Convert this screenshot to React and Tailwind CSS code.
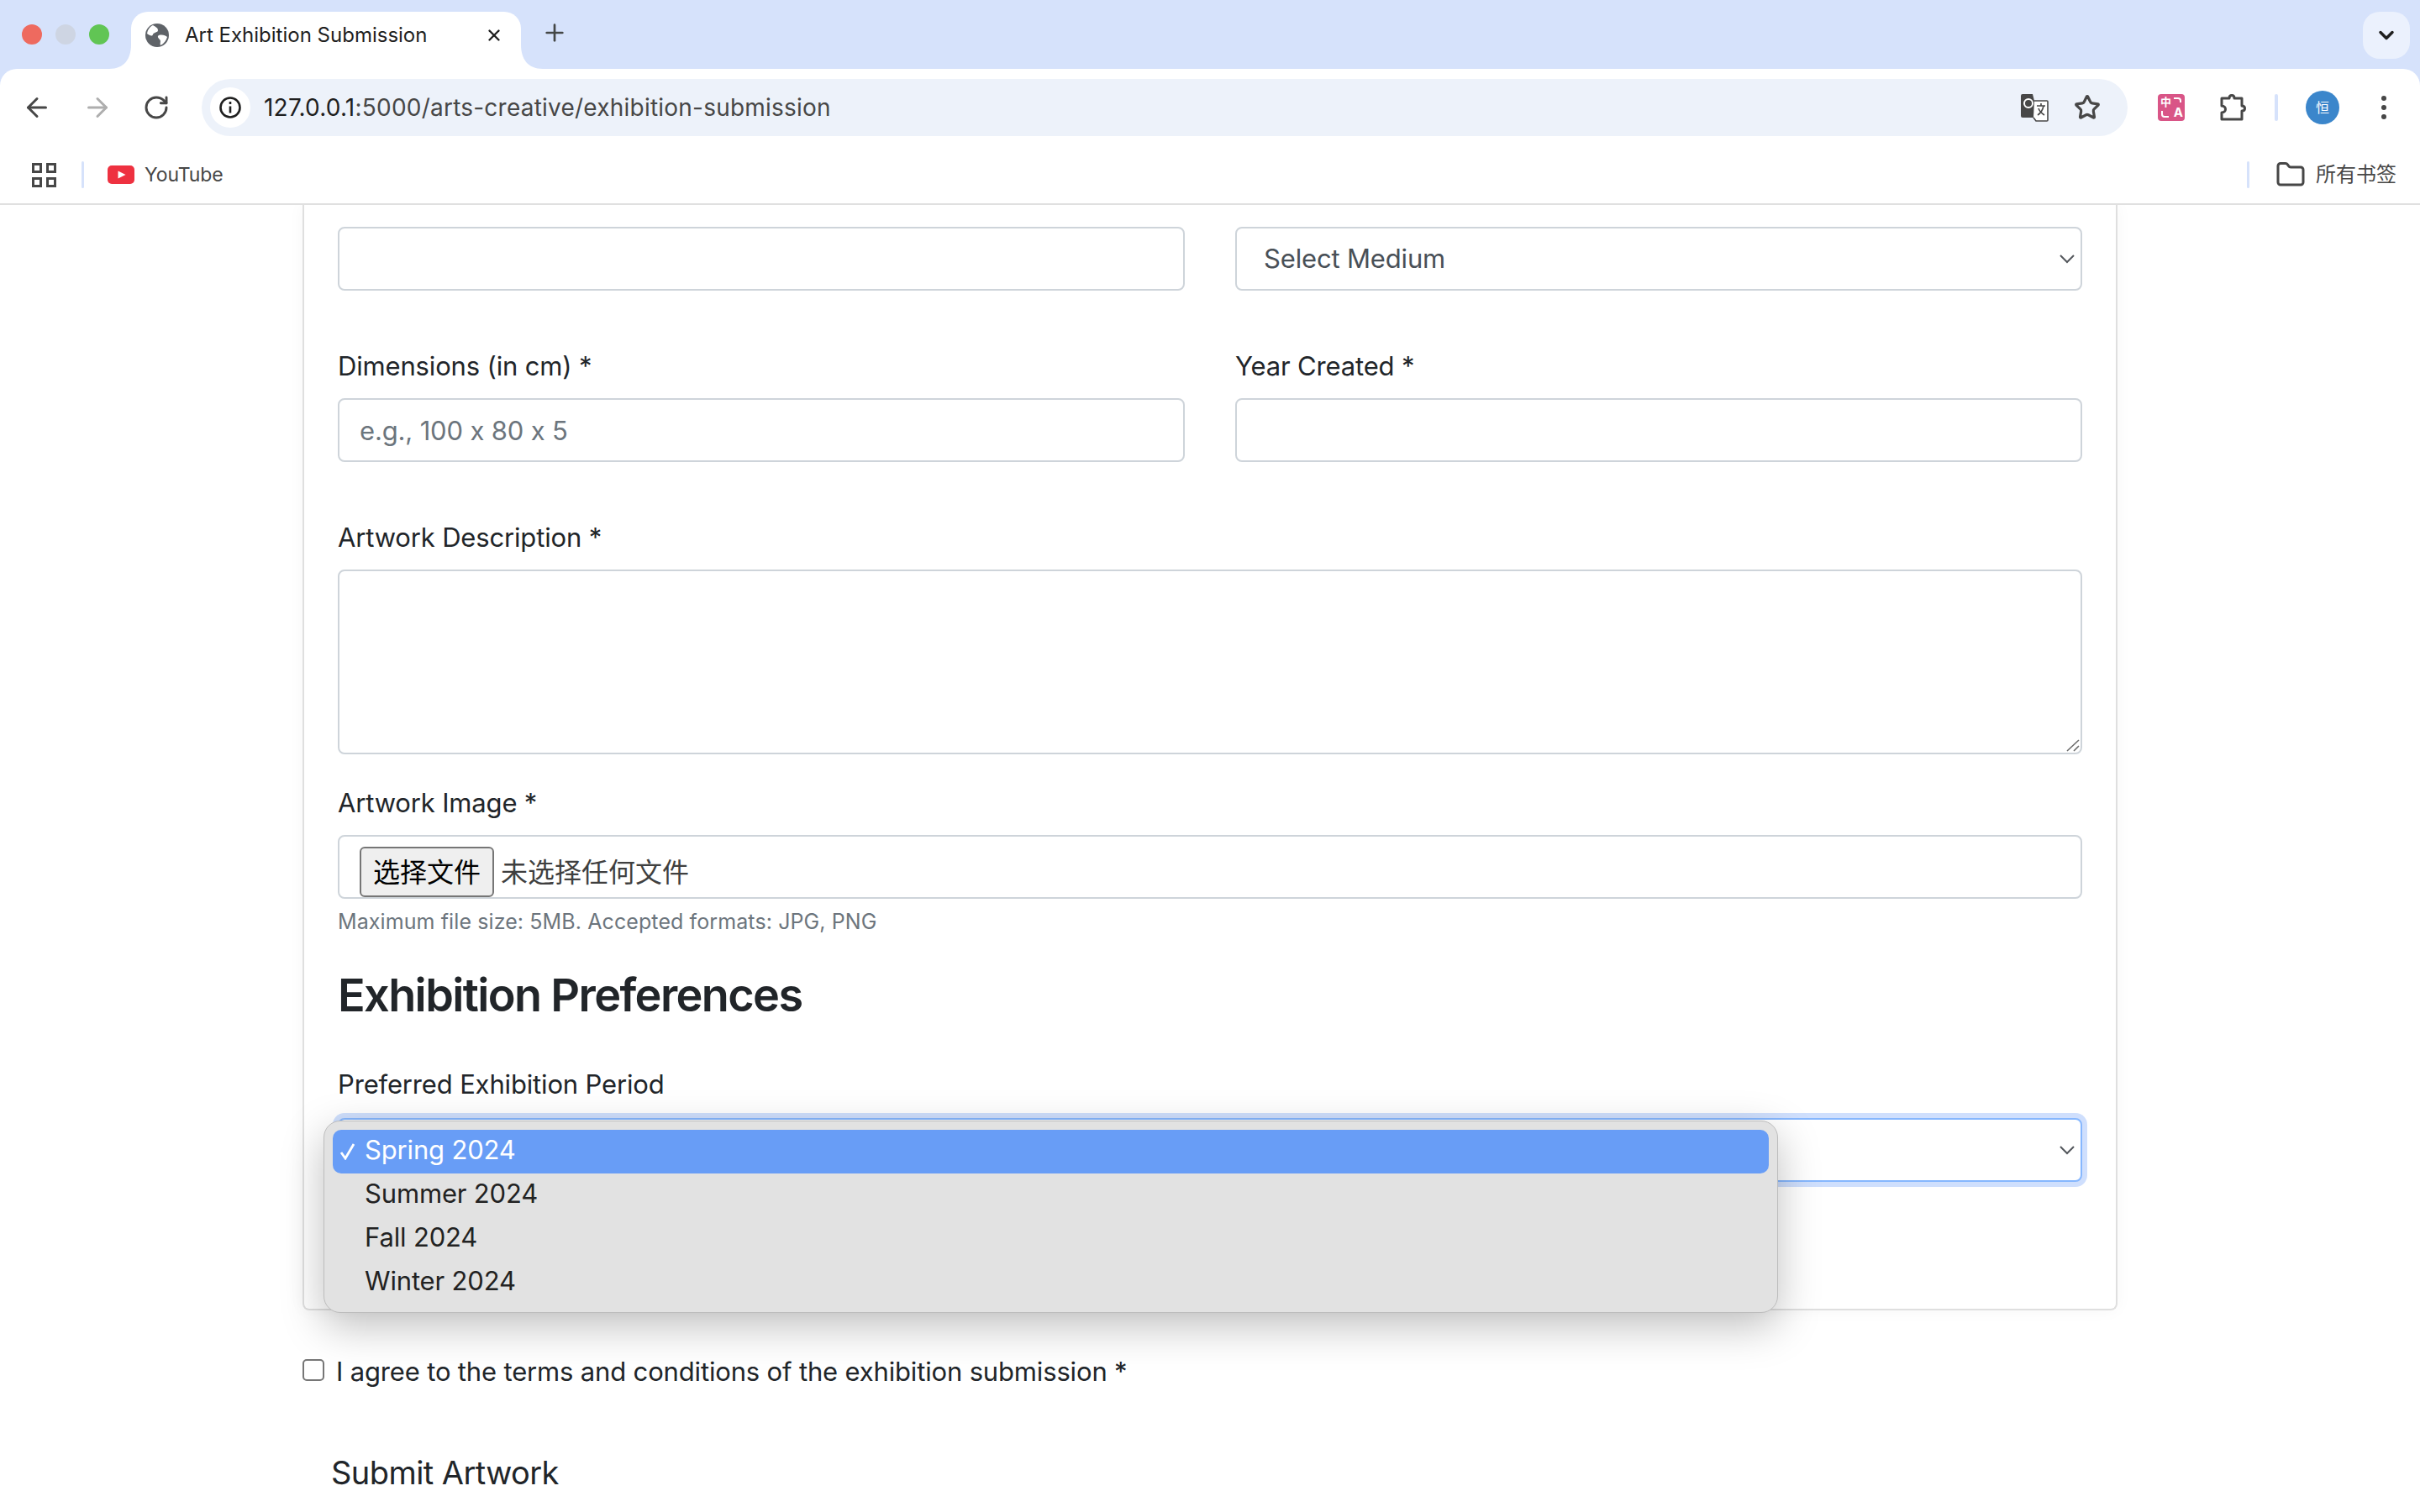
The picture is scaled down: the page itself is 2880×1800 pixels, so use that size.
import React from 'react'
import { ArrowLeft, ArrowRight, RotateCw, Star, Plus, X, ChevronDown, Folder } from 'lucide-react'

const sans = 'font-["Inter","Noto_Sans_CJK_SC",sans-serif]'

// ================================================================
// BROWSER CHROME
// ================================================================
const Globe = () => (
  <svg width="28" height="28" viewBox="0 0 28 28">
    <circle cx="14" cy="14" r="14" fill="#5f6368" />
    <path d="M9 2c3 2 6 3 6 6s-5 2-6 5-4 1-7-1C3 7 5 4 9 2zM16 14c4-1 8 0 10 2-1 4-4 8-8 10-1-3 1-5-1-7s-3-4-1-5z" fill="#fff" />
  </svg>
)

const Flare = ({ flip }) => (
  <svg width="26" height="29" viewBox="0 0 26 29" className={flip ? 'absolute bottom-0 left-[464px]' : 'absolute bottom-0 left-[-26px]'}>
    {flip
      ? <path d="M0 0C0 17 8 29 26 29H0z" fill="#fff" />
      : <path d="M26 0C26 17 18 29 0 29H26z" fill="#fff" />}
  </svg>
)

const TabStrip = () => (
  <div className="flex h-[82px] items-end bg-[#d6e2fb] relative">
    <div className="flex h-[68px] w-[156px] shrink-0 items-start gap-[16px] pl-[26px] pt-[15px]">
      <span className="block h-[24px] w-[24px] rounded-full bg-[#ee6a5f]" />
      <span className="block h-[24px] w-[24px] rounded-full bg-[#ced5e3]" />
      <span className="block h-[24px] w-[24px] rounded-full bg-[#61c554]" />
    </div>
    <div className="relative flex h-[68px] w-[464px] items-center rounded-t-[20px] bg-white pl-[17px] pb-[12px]">
      <Flare />
      <Globe />
      <span className={`${sans} ml-[19px] text-[24px] leading-none text-[#1f1f1f] whitespace-nowrap`}>Art Exhibition Submission</span>
      <X className="absolute left-[421px] top-[17px] text-[#1f1f1f]" size={22} strokeWidth={2.6} />
      <Flare flip />
    </div>
    <div className="ml-[24px] pb-[27px]">
      <Plus className="text-[#444746]" size={32} strokeWidth={2} />
    </div>
    <div className="ml-auto mr-[12px] mb-[12px] flex h-[56px] w-[56px] items-center justify-center rounded-[20px] bg-[#ebf1fd]">
      <ChevronDown className="text-[#1f1f1f]" size={28} strokeWidth={3} />
    </div>
  </div>
)

const PuzzleIcon = () => (
  <svg width="36" height="36" viewBox="0 0 36 36" fill="none" stroke="#474747" strokeWidth="3" strokeLinejoin="round">
    <path d="M5 7h9c0-2 1-3.500 3-3.500S20 5 20 7h9v9c2 0 3.500 1 3.500 3S31 22 29 22v10H5v-8c3 0 4.500-2 4.500-4S8 16 5 16z" />
  </svg>
)

const Toolbar = () => (
  <div className="relative bg-[#d6e2fb]">
    <div className="flex h-[92px] items-center rounded-t-[20px] bg-white">
      <div className="flex w-[240px] shrink-0 items-center gap-[36px] pl-[26px]">
        <ArrowLeft className="text-[#474747]" size={36} strokeWidth={2} />
        <ArrowRight className="text-[#aeaeae]" size={36} strokeWidth={2} />
        <RotateCw className="text-[#474747]" size={32} strokeWidth={2.2} />
      </div>
      <div className="flex h-[68px] w-[2292px] shrink-0 items-center rounded-full bg-[#edf2fa] pl-[10px]">
        <div className="flex h-[48px] w-[48px] items-center justify-center rounded-full bg-white">
          <svg width="28" height="28" viewBox="0 0 28 28" fill="none" stroke="#1f1f1f" strokeWidth="2.6">
            <circle cx="14" cy="14" r="11.5" />
            <path d="M14 12.500v8M14 7v3" />
          </svg>
        </div>
        <span className={`${sans} ml-[16px] text-[28px] leading-none tracking-[0.008em] text-[#1f1f1f] whitespace-nowrap`}>
          127.0.0.1<span className="text-[#474747]">:5000/arts-creative/exhibition-submission</span>
        </span>
        <div className="ml-auto mr-[32px] flex items-center gap-[30px]">
          <svg width="34" height="34" viewBox="0 0 34 34">
            <path d="M3 1h12l7 28H3a2 2 0 0 1-2-2V3a2 2 0 0 1 2-2z" fill="#474747" />
            <path d="M17 9h15a1 1 0 0 1 1 1v22a1 1 0 0 1-1 1H19l-3-4" fill="#fff" stroke="#474747" strokeWidth="1.6" />
            <circle cx="10" cy="12" r="5" fill="none" stroke="#fff" strokeWidth="2" />
            <path d="M20 15h10M25 12v3M28 15c-1 5-4 9-7 11M22 18c1 3 4 6 7 8" fill="none" stroke="#474747" strokeWidth="1.6" />
          </svg>
          <Star className="text-[#474747]" size={32} strokeWidth={2.4} />
        </div>
      </div>
      <div className="ml-[36px] flex h-[32px] w-[32px] items-center justify-center rounded-[4px] bg-[#d95587] relative overflow-hidden">
        <span className={`${sans} absolute left-[3px] top-[3px] text-[13px] font-bold leading-none text-white`}>中</span>
        <span className={`${sans} absolute right-[2px] bottom-[3px] text-[15px] font-bold leading-none text-white`}>A</span>
        <svg className="absolute left-0 top-0" width="32" height="32" viewBox="0 0 32 32" fill="none" stroke="#fff" strokeWidth="2">
          <path d="M19 5h5c2 0 3 1 3 3v2M5 20v4c0 2 1 3 3 3h5" />
        </svg>
      </div>
      <div className="ml-[39px]">
        <PuzzleIcon />
      </div>
      <span className="ml-[32px] block h-[32px] w-[4px] rounded-full bg-[#d6e2fb]" />
      <div className={`${sans} ml-[33px] flex h-[40px] w-[40px] items-center justify-center rounded-full bg-[#3b86cb] text-[16px] text-white`}>恒</div>
      <div className="ml-[50px] flex flex-col gap-[5px]">
        <span className="block h-[6px] w-[6px] rounded-full bg-[#474747]" />
        <span className="block h-[6px] w-[6px] rounded-full bg-[#474747]" />
        <span className="block h-[6px] w-[6px] rounded-full bg-[#474747]" />
      </div>
    </div>
  </div>
)

const BookmarksBar = () => (
  <div className="flex h-[70px] items-center border-b-2 border-[#e0e0e0] bg-white pl-[38px] pr-[28px]">
    <div className="grid grid-cols-2 gap-[5px]">
      {[0, 1, 2, 3].map((i) => (
        <span key={i} className="block h-[12px] w-[12px] border-[3px] border-[#474747]" />
      ))}
    </div>
    <span className="ml-[30px] block h-[32px] w-[3px] rounded-full bg-[#d6e2fb]" />
    <svg className="ml-[28px]" width="32" height="22" viewBox="0 0 32 22">
      <rect width="32" height="22" rx="5" fill="#ee3140" />
      <path d="M12.500 6.500l9 4.500-9 4.500z" fill="#fff" />
    </svg>
    <span className={`${sans} ml-[12px] text-[23px] leading-none tracking-[-0.005em] text-[#474747]`}>YouTube</span>
    <span className="ml-auto block h-[32px] w-[3px] rounded-full bg-[#d6e2fb]" />
    <Folder className="ml-[31px] text-[#474747]" size={36} strokeWidth={2} />
    <span className={`${sans} ml-[12px] text-[24px] leading-none text-[#474747]`}>所有书签</span>
  </div>
)

// ================================================================
// FORM BITS
// ================================================================
const inputCls = 'block h-[76px] w-full rounded-[8px] border-2 border-[#ced4da] bg-white px-[24px] text-[31px] text-[#495057] outline-none placeholder:text-[#6c757d]'

const Label = ({ children }) => (
  <label className="mb-[14px] block pt-[2px] text-[31px] leading-[48px] text-[#212529]">{children}</label>
)

const Caret = () => (
  <svg className="absolute right-[6px] top-1/2 -translate-y-1/2" width="20" height="12" viewBox="0 0 20 12" fill="none" stroke="#53575c" strokeWidth="2">
    <path d="M2 2l8 8 8-8" />
  </svg>
)

const SelectBox = ({ children }) => (
  <div className="relative flex h-[76px] items-center rounded-[8px] border-2 border-[#ced4da] bg-white pl-[32px] text-[31px] text-[#495057]">
    {children}
    <Caret />
  </div>
)

const periods = ['Spring 2024', 'Summer 2024', 'Fall 2024', 'Winter 2024']

const PeriodMenu = () => (
  <div className="absolute left-[-17px] top-[3px] z-10 flex h-[229px] w-[1731px] flex-col rounded-[20px] border border-[#bdbdbd] bg-[#e2e2e2] px-[10px] pt-[10px] shadow-[0_16px_50px_rgba(0,0,0,0.25)]">
    {periods.map((p, i) => (
      <div
        key={p}
        className={
          i === 0
            ? 'relative flex h-[52px] shrink-0 items-center rounded-[10px] bg-[#689df6] pb-[3px] pl-[38px] text-[31px] text-white'
            : 'flex h-[52px] shrink-0 items-center pb-[3px] pl-[38px] text-[31px] text-[#222222]'
        }
      >
        {i === 0 && (
          <svg className="absolute left-[8px] top-[16px]" width="20" height="20" viewBox="0 0 20 20" fill="none" stroke="#fff" strokeWidth="2.8">
            <path d="M2 11l5 7 10-17" />
          </svg>
        )}
        {p}
      </div>
    ))}
  </div>
)

// ================================================================
// MAIN APP COMPONENT
// ================================================================
function App() {
  return (
    <div className="flex h-screen w-full flex-col overflow-hidden bg-white [font-feature-settings:'calt'_0]">
      <TabStrip />
      <Toolbar />
      <BookmarksBar />

      <main className={`${sans} flex-1 overflow-hidden pl-[360px] tracking-[-0.01em]`}>
        <div className="w-[2160px] rounded-b-[8px] border-x-2 border-b-2 border-[#dfdfdf] px-[40px] pt-[26px] shadow-[0_0_20px_rgba(0,0,0,0.04)]">
          <div className="grid grid-cols-2 gap-x-[60px]">
            <input className={inputCls} />
            <SelectBox>Select Medium</SelectBox>
          </div>

          <div className="mt-[64px] grid grid-cols-2 gap-x-[60px]">
            <div>
              <Label>Dimensions (in cm) *</Label>
              <input className={inputCls} placeholder="e.g., 100 x 80 x 5" />
            </div>
            <div>
              <Label>Year Created *</Label>
              <input className={inputCls} />
            </div>
          </div>

          <div className="mt-[64px]">
            <Label>Artwork Description *</Label>
            <div className="relative">
              <textarea className="block h-[220px] w-full resize-none rounded-[8px] border-2 border-[#ced4da] bg-white outline-none" />
              <svg className="absolute bottom-[3px] right-[3px]" width="20" height="20" viewBox="0 0 20 20" fill="none" stroke="#6b6b6b" strokeWidth="1.600">
                <path d="M5 19L19 6M13 19l6-6" />
              </svg>
            </div>
          </div>

          <div className="mt-[32px]">
            <Label>Artwork Image *</Label>
            <div className="flex h-[76px] items-start rounded-[8px] border-2 border-[#ced4da] bg-white pl-[24px] pt-[12px]">
              <div className="flex h-[60px] w-[160px] items-center justify-center rounded-[6px] border-2 border-[#767676] bg-[#efefef] pt-[2px] text-[32px] tracking-normal text-black">选择文件</div>
              <span className="ml-[8px] mt-[9px] text-[32px] leading-[44px] tracking-normal text-[#3f3f3f]">未选择任何文件</span>
            </div>
            <p className="mt-[8px] text-[25px] leading-[38px] tracking-[0.004em] text-[#6c757d]">Maximum file size: 5MB. Accepted formats: JPG, PNG</p>
          </div>

          <h3 className="mt-[35px] text-[54px] font-semibold leading-[68px] tracking-[-0.03em] text-[#212529]">Exhibition Preferences</h3>

          <div className="mt-[46px] pb-[151px]">
            <Label>Preferred Exhibition Period</Label>
            <div className="relative mt-[16px]">
              <div className="relative h-[76px] rounded-[8px] border-2 border-[#86b7fe] bg-white shadow-[0_0_0_6px_#cfdffd]">
                <Caret />
              </div>
              <PeriodMenu />
            </div>
          </div>
        </div>

        <div className="mt-[49px] flex items-center">
          <span className="mb-[4px] block h-[26px] w-[26px] rounded-[5px] border-2 border-[#767676] bg-white" />
          <span className="ml-[14px] text-[31px] leading-[48px] text-[#212529]">I agree to the terms and conditions of the exhibition submission *</span>
        </div>

        <div className="mt-[66px] pl-[34px] text-[38px] leading-[60px] tracking-[-0.015em] text-[#212529]">Submit Artwork</div>
      </main>
    </div>
  )
}

export default App
